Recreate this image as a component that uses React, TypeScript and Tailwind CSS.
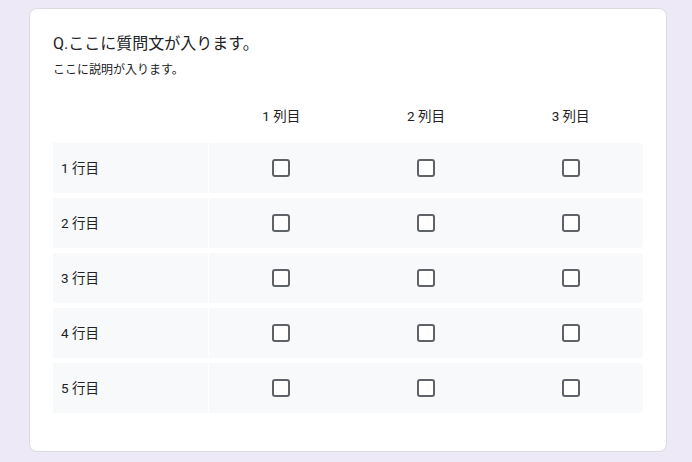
const COLUMNS = ["1 列目", "2 列目", "3 列目"];
const ROWS = ["1 行目", "2 行目", "3 行目", "4 行目", "5 行目"];

function Checkbox() {
  return (
    <span className="block h-[18px] w-[18px] rounded-[3px] border-2 border-[#5f6368] bg-white" />
  );
}

export default function App() {
  return (
    <div className="min-h-screen bg-[#ede9f7] px-[29px] pb-[10px] pt-2 font-['Roboto','Noto_Sans_CJK_JP',sans-serif] text-[#202124]">
      <div className="h-[444px] w-[638px] rounded-lg border border-[#dadce0] bg-white pl-[23px] pt-[23px]">
        {/* Question */}
        <h1 className="text-[16px] leading-6">Q.ここに質問文が入ります。</h1>
        <p className="mt-[5px] text-[12px] leading-[18px]">ここに説明が入ります。</p>

        {/* Grid */}
        <div className="mt-[25px] w-[590px]">
          <div className="grid h-6 grid-cols-[156px_1fr_1fr_1fr] items-center text-[13.5px]">
            <span />
            {COLUMNS.map((c) => (
              <span key={c} className="text-center">
                {c}
              </span>
            ))}
          </div>

          <div className="mt-[15px] flex flex-col gap-[5px]">
            {ROWS.map((r) => (
              <div key={r} className="grid h-[50px] grid-cols-[156px_1fr_1fr_1fr]">
                <div className="mr-px flex items-center bg-[#f8f9fa] pl-2 text-[13.5px]">{r}</div>
                {COLUMNS.map((c, i) => (
                  <div
                    key={c}
                    className={`flex items-center justify-center bg-[#f8f9fa] ${i === 2 ? "rounded-r" : ""}`}
                  >
                    <Checkbox />
                  </div>
                ))}
              </div>
            ))}
          </div>
        </div>
      </div>
    </div>
  );
}
